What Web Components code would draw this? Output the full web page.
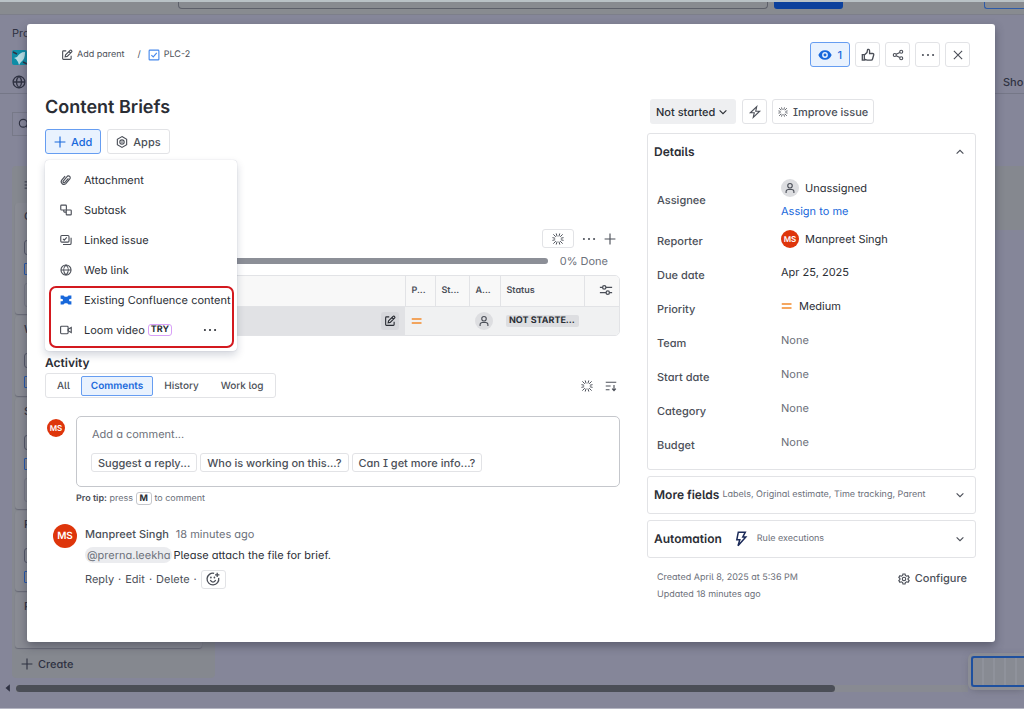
<!DOCTYPE html>
<html lang="en">
<head>
<meta charset="utf-8">
<meta name="viewport" content="width=device-width, initial-scale=1">
<title>PLC-2 Content Briefs</title>
<style>
	body {
		margin: 0;
		overflow: hidden;
		font: 11px/16px Inter, "Noto Sans", sans-serif;
		font-feature-settings: "cv11", "cv05", "cv08";
		text-rendering: geometricPrecision;
		color: #2b2e35;

		--text: #2b2e35;
		--subtle: #4b4f58;
		--muted: #6c707a;
		--line: #e2e3e6;
		--blue: #1868db;
		--blue-line: #669df1;
		--blue-bg: #e9f2fe;
	}
</style>
</head>
<body>
<board-page></board-page>
<issue-dialog></issue-dialog>

<script>
const ICONS = {
	edit: '<path d="M7 2.500H3.200a1 1 0 0 0-1 1v9.300a1 1 0 0 0 1 1h9.300a1 1 0 0 0 1-1V9M5.500 10.500l.6-2.800 6-6a1 1 0 0 1 1.400 0l.8.8a1 1 0 0 1 0 1.400l-6 6zM10.500 3.300l2.200 2.200"/>',
	task: '<rect x="1.500" y="1.500" width="13" height="13" rx="1"/><path d="M4.500 8.200 7 10.600l4.700-5.400"/>',
	eye: '<path fill="currentColor" stroke="none" fill-rule="evenodd" d="M8 2.500c3.600 0 6.300 2.300 7.600 5.500-1.300 3.200-4 5.500-7.600 5.500S1.700 11.200.4 8C1.700 4.800 4.400 2.500 8 2.500zM8 4.700a3.300 3.300 0 1 0 0 6.600 3.300 3.300 0 0 0 0-6.600zm0 1.600a1.700 1.700 0 1 1 0 3.400 1.700 1.700 0 0 1 0-3.400z"/>',
	like: '<path d="M1.500 7.500h2.300v6.300H1.500zM3.800 8l3-2.800.7-3.200c.2-.8 2.300-.6 2.300 1v3.300h3.500c1 0 1.500.8 1.200 1.700l-1.300 4.600c-.2.800-.8 1.200-1.600 1.200H7l-3.200-1"/>',
	share: '<circle cx="3.700" cy="8" r="2"/><circle cx="12.300" cy="3.700" r="2"/><circle cx="12.300" cy="12.300" r="2"/><path d="m5.600 7 4.800-2.400M5.600 9l4.800 2.400"/>',
	more: '<g fill="currentColor" stroke="none"><circle cx="2.200" cy="8" r="1.200"/><circle cx="8" cy="8" r="1.200"/><circle cx="13.800" cy="8" r="1.200"/></g>',
	close: '<path d="m2.500 2.500 11 11M13.500 2.500l-11 11"/>',
	plus: '<path d="M8 .8v14.400M.8 8h14.400"/>',
	apps: '<path d="M8 .8 14.200 4.400v7.200L8 15.200 1.800 11.600V4.400z"/><circle cx="8" cy="8" r="2.900"/><circle cx="8" cy="8" r=".4"/>',
	gear: '<path d="m6.600 1.300-.4 2-1.700 1-2-.7L1.100 6l1.500 1.300v1.400L1.100 10l1.400 2.400 2-.7 1.700 1 .4 2h2.800l.4-2 1.700-1 2 .7 1.400-2.400-1.500-1.300V7.300L14.900 6l-1.400-2.400-2 .7-1.700-1-.4-2z"/><circle cx="8" cy="8" r="2.300"/>',
	clip: '<path d="m11.200 5.800-4.700 5.400a1.400 1.400 0 0 1-2.200-1.800l5-6a2.400 2.400 0 0 1 3.800 3l-5.300 6.400a3.600 3.600 0 0 1-5.500-4.600l4.500-5.400"/>',
	subtask: '<rect x="1" y="1.500" width="7.500" height="6.500" rx="1"/><rect x="8.300" y="8" width="6.700" height="6.500" rx="1"/><path d="M5 8v1.800a1 1 0 0 0 1 1h2.300"/>',
	linked: '<rect x="1" y="2" width="11" height="8.800" rx="1.500"/><path d="M4 6.600l1.700 1.600L9 4.600M14.800 5v7.200a1.800 1.800 0 0 1-1.800 1.800H4"/>',
	globe: '<circle cx="8" cy="8" r="6.700"/><path d="M1.300 8h13.400M8 1.300c-4 4-4 9.400 0 13.400M8 1.300c4 4 4 9.400 0 13.400"/>',
	confluence: '<path fill="currentColor" stroke="none" d="M.8 2h4c.4 1.200 1.500 1.800 3.200 1.800s2.800-.6 3.200-1.800h4v4.200l-2.400.3c-1 .3-1 2.700 0 3l2.400.3V14h-4c-.4-1.200-1.500-1.800-3.200-1.800s-2.800.6-3.200 1.800h-4V9.800l2.400-.3c1-.3 1-2.700 0-3L.8 6.200z"/>',
	video: '<rect x=".8" y="3" width="10" height="10" rx="1.200"/><path d="m10.800 7 4.200-2.500v7L10.800 9z"/>',
	spark: '<path stroke-width="1.300" d="M5.600.6l1.200 4M10.400.6l-1.200 4M5.600 15.400l1.200-4M10.400 15.400l-1.200-4M.6 6.200l3.600.8M.6 9.800l3.600-.8M15.400 6.200l-3.600.8M15.400 9.800l-3.600-.8M1.800 1.800l3.300 3.300M14.200 1.800l-3.300 3.300M1.800 14.200l3.300-3.300M14.200 14.200l-3.300-3.300"/>',
	sliders: '<path d="M1 5h3M8 5h7M1 11h7M12 11h3"/><circle cx="6" cy="5" r="1.900"/><circle cx="10" cy="11" r="1.900"/>',
	sort: '<path d="M1 3h14M1 8h6.500M1 13h5M12 6.500V14M9.500 11.600 12 14.200l2.500-2.600"/>',
	person: '<circle cx="8" cy="5" r="3"/><path d="M2.800 14.500v-1.700A2.800 2.800 0 0 1 5.600 10h4.800a2.800 2.800 0 0 1 2.800 2.800v1.700"/>',
	medium: '<path stroke="#f28b2c" stroke-width="2" d="M1 5.300h13M1 10.700h13"/>',
	bolt: '<path d="M10.300.8 1.800 9h5.200l-1.300 6.200L14.200 7H9z"/>',
	rule: '<path d="M5.300 1.200h7L9.800 6h3L5 14.800l1.800-6h-3z"/>',
	down: '<path d="m3.500 5.700 4.500 4.600 4.500-4.600"/>',
	up: '<path d="M3.500 10.300 8 5.700l4.500 4.600"/>',
	emoji: '<path d="M9.300 1.500a6.700 6.700 0 1 0 5.200 5.300M5 9.200c.6 1.600 1.600 2.300 3 2.300s2.400-.7 3-2.300M12.800.8v5M10.300 3.300h5"/><path stroke-width="2" stroke-linecap="round" d="M5.600 6.200v.2M9.600 6.200v.2"/>',
	search: '<circle cx="7" cy="7" r="5.200"/><path d="m11 11 4 4"/>',
	rocket: '<path fill="#fff" stroke="none" opacity=".7" d="M13 2c-4 0-6 2-8 5L2 8l2 1 2 3 1 3 2-3c3-2 4-5 4-10z"/><path d="M1 2l4 2M11 12l4 2"/>',
	left: '<path fill="currentColor" stroke="none" d="M11 2v12L4 8z"/>'
};

function define(name, html, setup) {
	customElements.define(name, class extends HTMLElement {
		constructor() {
			super();
			const template = document.createElement('template');
			template.innerHTML = html;
			this.attachShadow({ mode: 'open' }).appendChild(template.content.cloneNode(true));
		}
		connectedCallback() {
			if (setup) {
				setup(this, this.shadowRoot);
			}
		}
	});
}

define('ui-icon', `
	<style>
		:host { display: inline-block; flex: none; width: 12px; height: 12px; }
		:host([size="14"]) { width: 14px; height: 14px; }
		:host([size="16"]) { width: 16px; height: 16px; }
		:host([size="10"]) { width: 10px; height: 10px; }
		svg { display: block; width: 100%; height: 100%; fill: none; stroke: currentColor; stroke-width: 1.5; overflow: visible; }
	</style>
	<svg viewBox="0 0 16 16" aria-hidden="true"></svg>
`, (el, root) => {
	root.querySelector('svg').innerHTML = ICONS[el.getAttribute('name')] || '';
});

define('ui-button', `
	<style>
		:host { display: inline-flex; height: 25px; min-width: 25px; }
		button {
			flex: 1;
			display: flex;
			align-items: center;
			justify-content: center;
			gap: 5px;
			box-sizing: border-box;
			padding: 0 var(--pad, 4px);
			border: 1px solid var(--line);
			border-radius: 3px;
			background: #fff;
			color: var(--subtle);
			font: inherit;
			font-weight: 500;
			font-feature-settings: inherit;
			text-rendering: inherit;
			white-space: nowrap;
		}
		:host([selected]) button {
			border-color: var(--blue-line);
			background: var(--blue-bg);
			color: var(--blue);
		}
		:host([small]) { height: 19px; }
		:host([plain]) { height: 16px; min-width: 0; --pad: 0; }
		:host([plain]) button { border: 0; background: none; font-weight: inherit; }
	</style>
	<button type="button"><slot></slot></button>
`, (el, root) => {
	if (el.title) {
		root.querySelector('button').setAttribute('aria-label', el.title);
	}
});

define('ui-avatar', `
	<style>
		:host {
			display: inline-flex;
			align-items: center;
			justify-content: center;
			flex: none;
			width: 18px;
			height: 18px;
			border-radius: 50%;
			background: #de350b;
			color: #fff;
			font-size: 8px;
			font-weight: 600;
		}
		:host([large]) { width: 24px; height: 24px; font-size: 10px; }
		:host([empty]) { background: #dddee1; color: var(--subtle); }
	</style>
	<slot></slot>
`);

/* The dimmed board behind the dialog */
define('board-page', `
	<style>
		:host {
			display: flex;
			flex-direction: column;
			min-height: 100vh;
			box-sizing: border-box;
			background: #858699;
			border-top: 2px solid #b9c2c6;
			border-bottom: 1px solid #b4b5c2;
			color: #2f3242;
		}
		.top {
			display: flex;
			align-items: flex-start;
			height: 12px;
			padding-left: 178px;
			background: #888b90;
			border-bottom: 1px solid #7d7f8a;
			overflow: hidden;
		}
		.top div { box-sizing: border-box; height: 7px; }
		.find { flex: 1; border: 1px solid #5d606a; border-top: 0; border-radius: 0 0 4px 4px; }
		.new { width: 69px; margin: 0 141px 0 6px; background: #0c419c; border-radius: 0 0 3px 3px; }
		.trial { width: 40px; border: 1px solid #2d5ba8; border-width: 0 0 1px 1px; border-radius: 0 0 0 3px; }
		.nav {
			display: grid;
			gap: 6px;
			height: 67px;
			padding: 10px 0 1px 12px;
			border-bottom: 1px solid #757787;
		}
		.nav div { display: flex; align-items: center; justify-content: space-between; height: 16px; }
		.tile { display: flex; width: 15px; height: 15px; background: #0f8da6; border-radius: 2px; }
		.show { width: 21px; overflow: hidden; font-weight: 500; }
		.filter { display: flex; align-items: center; height: 22px; margin: 18px 0 30px 12px; padding-left: 5px; border: 1px solid #777988; width: 140px; }
		.columns { flex: 1; display: flex; justify-content: space-between; align-items: flex-start; }
		.column { width: 203px; margin-left: 12px; background: #85888f; border-radius: 4px; }
		.next { width: 30px; height: 64px; background: #85888f; }
		.head { height: 37px; padding-left: 12px; display: flex; align-items: center; }
		.card {
			box-sizing: border-box;
			height: 80px;
			width: 187px;
			margin: 0 0 2px 3px;
			padding: 5px 9px;
			border-radius: 3px;
			background: #898b93;
			box-shadow: 0 1px 1px #696b77;
			overflow: hidden;
			font-weight: 500;
		}
		.tall { height: 111px; }
		.last { height: 55px; }
		.check { height: 13px; width: 150px; margin-top: 16px; border: 1px solid #555868; border-radius: 3px; }
		.kind { height: 10px; width: 10px; margin-top: 8px; border: 1px solid #2558ac; border-radius: 1px; }
		.tag { height: 22px; width: 150px; margin-top: 8px; border: 1px solid #777a86; border-radius: 3px; }
		.add { display: flex; align-items: center; gap: 5px; height: 28px; padding-left: 9px; font-weight: 500; }
		.scroll { display: flex; align-items: center; gap: 3px; height: 10px; margin-bottom: 15px; padding-left: 3px; }
		.track { flex: 1; margin-right: 56px; background: #888a92; }
		.thumb { width: 86%; height: 7px; border-radius: 4px; background: #4b4e57; }
		.map {
			position: absolute;
			right: 0;
			bottom: 22px;
			box-sizing: border-box;
			width: 53px;
			height: 31px;
			border: 2px solid #1e509f;
			border-right: 0;
			border-radius: 3px 0 0 3px;
			background: repeating-linear-gradient(90deg, #888b93 0 9px, #8f929b 9px 11px);
			box-shadow: 0 0 0 3px #8b8d95, 0 2px 8px #60626f;
		}
	</style>
	<div class="top"><div class="find"></div><div class="new"></div><div class="trial"></div></div>
	<div class="nav">
		<div>Pro</div>
		<div><span class="tile"><ui-icon name="rocket" size="16"></ui-icon></span></div>
		<div><ui-icon name="globe" size="14"></ui-icon><span class="show">Sho</span></div>
	</div>
	<div class="filter"><ui-icon name="search"></ui-icon></div>
	<div class="columns">
		<div class="column">
			<div class="head"><ui-icon name="sort" size="10"></ui-icon></div>
			<div class="card tall">C<div class="check"></div><div class="kind"></div><div class="tag"></div></div>
			<div class="card">W<div class="check"></div><div class="kind"></div></div>
			<div class="card tall">S<div class="check"></div><div class="kind"></div><div class="tag"></div></div>
			<div class="card">P<div class="check"></div><div class="kind"></div></div>
			<div class="card last">P</div>
			<div class="add"><ui-icon name="plus"></ui-icon>Create</div>
		</div>
		<div class="next"></div>
	</div>
	<div class="scroll"><ui-icon name="left" size="10"></ui-icon><div class="track"><div class="thumb"></div></div></div>
	<div class="map"></div>
`);

define('menu-item', `
	<style>
		:host { display: block; }
		button {
			display: flex;
			align-items: center;
			width: 100%;
			height: 30px;
			padding: 0 20px 0 15px;
			border: 0;
			background: none;
			color: var(--text);
			font: inherit;
			font-feature-settings: inherit;
			text-rendering: inherit;
			white-space: nowrap;
		}
		ui-icon { margin-right: 12px; color: var(--icon, var(--subtle)); }
		slot[name="end"]::slotted(*) { margin-left: auto; }
	</style>
	<button type="button" role="menuitem"><ui-icon></ui-icon><slot></slot><slot name="end"></slot></button>
`, (el, root) => {
	root.querySelector('ui-icon').setAttribute('name', el.getAttribute('icon'));
	root.querySelector('ui-icon').connectedCallback();
});

define('add-menu', `
	<style>
		:host {
			display: block;
			box-sizing: border-box;
			width: 192px;
			padding: 5px 0 6px;
			border-radius: 4px;
			background: #fff;
			box-shadow: 0 0 1px rgba(9, 30, 66, .25), 0 4px 8px rgba(9, 30, 66, .18);
		}
		.try {
			margin-left: 3px;
			padding: 0 2px;
			border: 1px solid #d8a0f7;
			border-radius: 3px;
			font-size: 9px;
			line-height: 10px;
			font-weight: 700;
		}
		.mark {
			position: absolute;
			inset: auto 3px 3px 4px;
			height: 58px;
			border: 2px solid #d3191f;
			border-radius: 7px;
			pointer-events: none;
		}
		.blue { --icon: #1868db; }
	</style>
	<menu-item icon="clip">Attachment</menu-item>
	<menu-item icon="subtask">Subtask</menu-item>
	<menu-item icon="linked">Linked issue</menu-item>
	<menu-item icon="globe">Web link</menu-item>
	<menu-item icon="confluence" class="blue">Existing Confluence content</menu-item>
	<menu-item icon="video">Loom video<span class="try">TRY</span><ui-icon slot="end" name="more" size="14"></ui-icon></menu-item>
	<div class="mark"></div>
`);

define('child-issues', `
	<style>
		:host { display: block; }
		.tools { display: flex; align-items: center; justify-content: flex-end; gap: 8px; height: 19px; padding-right: 4px; color: var(--subtle); }
		.tools ui-button:first-child { width: 32px; }
		.done { display: flex; align-items: center; gap: 12px; height: 16px; margin: 5px 0 6px; padding-right: 12px; color: var(--muted); }
		.bar { flex: 1; height: 6px; border-radius: 3px; background: #8c8f97; }
		.frame { border: 1px solid var(--line); border-radius: 5px; overflow: hidden; }
		table { width: 100%; table-layout: fixed; border-collapse: collapse; font-size: 10px; }
		th, td { box-sizing: border-box; height: 30px; padding: 0 6px; text-align: left; vertical-align: middle; white-space: nowrap; }
		th { border-left: 1px solid var(--line); background: #f8f8f8; color: var(--subtle); font-weight: 600; font-size: 9px; }
		th:first-child { border-left: 0; }
		td { height: 29px; background: #f0f1f2; border-top: 1px solid var(--line); }
		td:first-child { background: #e1e2e5; text-align: right; }
		td:first-child span { display: inline-flex; padding: 3px; border-radius: 3px; background: #d6d7db; }
		ui-icon, ui-avatar, td span { vertical-align: middle; }
		.end { text-align: right; padding-right: 6px; }
		.state { box-sizing: border-box; padding: 0 3px; border-radius: 2px; background: #dddee1; font-size: 9px; font-weight: 700; line-height: 12px; display: inline-block; width: 73px; }
	</style>
	<div class="tools">
		<ui-button small title="Suggest child issues"><ui-icon name="spark"></ui-icon></ui-button>
		<ui-button plain title="More"><ui-icon name="more" size="14"></ui-icon></ui-button>
		<ui-button plain title="Create child issue"><ui-icon name="plus"></ui-icon></ui-button>
	</div>
	<div class="done"><div class="bar" role="progressbar" aria-valuenow="0"></div>0% Done</div>
	<div class="frame">
		<table>
			<colgroup><col><col style="width:30px"><col style="width:34px"><col style="width:31px"><col style="width:84px"><col style="width:35px"></colgroup>
			<tr><th></th><th>P...</th><th>St...</th><th>A...</th><th>Status</th><th class="end"><ui-icon name="sliders" size="14"></ui-icon></th></tr>
			<tr>
				<td><span><ui-icon name="edit"></ui-icon></span></td>
				<td><ui-icon name="medium"></ui-icon></td>
				<td></td>
				<td><ui-avatar empty><ui-icon name="person"></ui-icon></ui-avatar></td>
				<td><span class="state">NOT STARTE...</span></td>
				<td></td>
			</tr>
		</table>
	</div>
`);

define('activity-feed', `
	<style>
		:host { display: block; }
		h2 { margin: 0; font-size: 12px; line-height: 16px; font-weight: 600; }
		.bar { display: flex; align-items: center; gap: 12px; margin: 2px 0 18px; padding-right: 3px; color: var(--subtle); }
		.tabs { display: flex; align-items: center; height: 23px; margin-right: auto; border: 1px solid var(--line); border-radius: 3px; }
		.tabs button {
			height: 20px;
			padding: 0 10px;
			border: 1px solid transparent;
			border-radius: 2px;
			background: none;
			color: var(--subtle);
			font: inherit;
			font-size: 10px;
			font-weight: 500;
			text-rendering: inherit;
		}
		.tabs .on { padding: 0 9px; border-color: var(--blue-line); background: var(--blue-bg); color: var(--blue); font-weight: 600; }
		.write { display: grid; grid-template-columns: 18px 1fr; column-gap: 11px; padding-left: 2px; }
		.write > ui-avatar { margin-top: 3px; }
		.box { box-sizing: border-box; height: 71px; padding: 9px 14px; border: 1px solid #c5c7cc; border-radius: 5px; }
		input { display: block; width: 100%; box-sizing: border-box; height: 16px; margin-bottom: 11px; padding: 0 1px; border: 0; font: inherit; font-feature-settings: inherit; text-rendering: inherit; }
		input::placeholder { color: var(--muted); opacity: 1; }
		.chips { display: flex; gap: 3px; --pad: 6px; }
		.tip { grid-column: 2; margin-top: 4px; color: var(--muted); font-size: 9px; }
		.tip b { color: var(--subtle); font-weight: 600; }
		kbd { padding: 0 3px; border: 1px solid #c5c7cc; border-radius: 3px; color: var(--text); font: inherit; font-weight: 700; }
		.comment { display: grid; grid-template-columns: 24px 1fr; column-gap: 8px; margin-top: 17px; padding-left: 8px; }
		.body { padding-top: 2px; }
		.body div { display: flex; align-items: center; height: 16px; }
		.body .line { margin: 5px 0 6px; }
		.body .who { color: var(--subtle); font-weight: 500; gap: 7px; }
		.time { color: var(--muted); font-weight: 400; }
		.at { margin-right: 1px; padding: 0 2px; border-radius: 8px; background: #ebecef; color: var(--muted); line-height: 16px; }
		.body .acts { gap: 4px; height: 20px; color: var(--subtle); }
	</style>
	<h2>Activity</h2>
	<div class="bar">
		<div class="tabs">
			<button type="button">All</button><button type="button" class="on">Comments</button><button type="button">History</button><button type="button">Work log</button>
		</div>
		<ui-button plain title="Summarize"><ui-icon name="spark"></ui-icon></ui-button>
		<ui-button plain title="Newest first"><ui-icon name="sort"></ui-icon></ui-button>
	</div>
	<div class="write">
		<ui-avatar>MS</ui-avatar>
		<div class="box">
			<input type="text" aria-label="Add a comment" placeholder="Add a comment...">
			<div class="chips">
				<ui-button small>Suggest a reply...</ui-button>
				<ui-button small>Who is working on this...?</ui-button>
				<ui-button small>Can I get more info...?</ui-button>
			</div>
		</div>
		<div class="tip"><b>Pro tip:</b> press <kbd>M</kbd> to comment</div>
	</div>
	<div class="comment">
		<ui-avatar large>MS</ui-avatar>
		<div class="body">
			<div class="who">Manpreet Singh<span class="time">18 minutes ago</span></div>
			<div class="line"><span class="at">@prerna.leekha</span>Please attach the file for brief.</div>
			<div class="acts">
				<ui-button plain>Reply</ui-button>·<ui-button plain>Edit</ui-button>·<ui-button plain>Delete</ui-button>·
				<ui-button small title="Add reaction"><ui-icon name="emoji" size="14"></ui-icon></ui-button>
			</div>
		</div>
	</div>
`);

define('detail-row', `
	<style>
		:host { display: grid; grid-template-columns: 124px 1fr; align-items: start; min-height: 34px; }
		.label { padding-top: 3px; color: var(--subtle); font-weight: 500; }
		.value { display: flex; align-items: center; gap: 6px; min-height: 16px; }
		:host([none]) .value { color: var(--muted); }
		:host([tall]) { height: 51px; align-items: start; }
		:host([tall]) .label { padding-top: 13px; }
		:host([tall]) .value { flex-wrap: wrap; }
	</style>
	<div class="label"></div>
	<div class="value"><slot></slot></div>
`, (el, root) => {
	root.querySelector('.label').textContent = el.getAttribute('label');
});

define('panel-box', `
	<style>
		:host { display: block; border: 1px solid var(--line); border-radius: 3px; }
		header { display: flex; align-items: center; height: 36px; padding: 0 9px 0 6px; color: var(--muted); font-size: 9px; white-space: nowrap; }
		h2 { margin: 0 3px 0 0; color: var(--text); font-size: 12px; font-weight: 600; }
		ui-icon { margin-left: auto; color: var(--subtle); }
	</style>
	<header><h2></h2><slot name="note"></slot><ui-icon name="down"></ui-icon></header>
	<slot></slot>
`, (el, root) => {
	root.querySelector('h2').textContent = el.getAttribute('heading');
	if (el.hasAttribute('open')) {
		root.querySelector('ui-icon').setAttribute('name', 'up');
		root.querySelector('ui-icon').connectedCallback();
	}
});

define('issue-side', `
	<style>
		:host { display: flex; flex-direction: column; gap: 6px; }
		.actions { display: flex; gap: 5px; height: 25px; margin: 0 0 3px 3px; }
		.status { display: grid; align-items: center; width: 86px; margin-right: 1px; border-radius: 3px; background: #eeeff1; }
		.status > * { grid-area: 1 / 1; }
		.status ui-icon { justify-self: end; margin-right: 7px; pointer-events: none; }
		select { height: 25px; padding: 0 6px; border: 0; appearance: none; background: none; color: var(--text); font: inherit; font-feature-settings: inherit; font-weight: 500; text-rendering: inherit; }
		.rows { padding: 9px 9px 1px; }
		a { color: var(--blue); text-decoration: none; }
		.break { flex-basis: 100%; }
		.rule { margin: 0 8px; color: #1c2b59; }
		.note { display: flex; align-items: center; }
		footer { display: flex; justify-content: space-between; padding: 5px 9px 0 10px; color: var(--muted); font-size: 9px; line-height: 17px; }
		footer ui-button { height: 19px; font-size: 11px; font-weight: 500; }
	</style>
	<div class="actions">
		<label class="status"><select aria-label="Status"><option>Not started</option></select><ui-icon name="down"></ui-icon></label>
		<ui-button title="Automation"><ui-icon name="bolt"></ui-icon></ui-button>
		<ui-button style="--pad: 5px"><ui-icon name="spark" size="10"></ui-icon>Improve issue</ui-button>
	</div>
	<panel-box heading="Details" open>
		<div class="rows">
			<detail-row label="Assignee" tall><ui-avatar empty><ui-icon name="person"></ui-icon></ui-avatar>Unassigned<a href="#" class="break">Assign to me</a></detail-row>
			<detail-row label="Reporter"><ui-avatar>MS</ui-avatar>Manpreet Singh</detail-row>
			<detail-row label="Due date">Apr 25, 2025</detail-row>
			<detail-row label="Priority"><ui-icon name="medium"></ui-icon>Medium</detail-row>
			<detail-row label="Team" none>None</detail-row>
			<detail-row label="Start date" none>None</detail-row>
			<detail-row label="Category" none>None</detail-row>
			<detail-row label="Budget" none>None</detail-row>
		</div>
	</panel-box>
	<panel-box heading="More fields"><span slot="note">Labels, Original estimate, Time tracking, Parent</span></panel-box>
	<panel-box heading="Automation"><span slot="note" class="note"><ui-icon class="rule" name="rule" size="16"></ui-icon>Rule executions</span></panel-box>
	<footer>
		<div>Created April 8, 2025 at 5:36 PM<br>Updated 18 minutes ago</div>
		<ui-button plain><ui-icon name="gear"></ui-icon>Configure</ui-button>
	</footer>
`);

define('issue-dialog', `
	<style>
		:host { position: absolute; inset: 24px 29px 67px 27px; display: block; }
		.dialog { box-sizing: border-box; min-height: 100%; padding: 18px 19px 0 18px; border-radius: 3px; background: #fff; box-shadow: 0 4px 10px rgba(40, 42, 60, .45); }
		header { display: flex; align-items: center; gap: 5px; padding: 0 6px 0 16px; }
		nav { display: flex; align-items: center; gap: 5px; margin-right: auto; color: var(--subtle); font-size: 9px; }
		nav a { display: flex; align-items: center; gap: 4px; color: inherit; text-decoration: none; }
		nav span { margin: 0 2px 0 8px; }
		.task { color: #4688ec; }
		.columns { display: grid; grid-template-columns: 575fr 329fr; column-gap: 27px; margin-top: 29px; }
		h1 { margin: 0 0 9px; font-size: 18px; line-height: 24px; font-weight: 600; }
		.buttons { position: relative; display: flex; gap: 6px; --pad: 8px; margin-bottom: 75px; }
		add-menu { position: absolute; top: 31px; left: 0; z-index: 1; }
		activity-feed { margin-top: 19px; }
		issue-side { margin-top: 3px; }
	</style>
	<div class="dialog" role="dialog" aria-label="Content Briefs">
		<header>
			<nav>
				<a href="#"><ui-icon name="edit"></ui-icon>Add parent</a><span>/</span><a href="#"><ui-icon class="task" name="task"></ui-icon>PLC-2</a>
			</nav>
			<ui-button selected title="Watch" style="--pad: 7px"><ui-icon name="eye" size="14"></ui-icon>1</ui-button>
			<ui-button title="Vote"><ui-icon name="like" size="14"></ui-icon></ui-button>
			<ui-button title="Share"><ui-icon name="share"></ui-icon></ui-button>
			<ui-button title="Actions"><ui-icon name="more" size="14"></ui-icon></ui-button>
			<ui-button title="Close"><ui-icon name="close"></ui-icon></ui-button>
		</header>
		<div class="columns">
			<main>
				<h1>Content Briefs</h1>
				<div class="buttons">
					<ui-button selected><ui-icon name="plus"></ui-icon>Add</ui-button>
					<ui-button><ui-icon name="apps"></ui-icon>Apps</ui-button>
					<add-menu></add-menu>
				</div>
				<child-issues></child-issues>
				<activity-feed></activity-feed>
			</main>
			<issue-side></issue-side>
		</div>
	</div>
`);
</script>
</body>
</html>
